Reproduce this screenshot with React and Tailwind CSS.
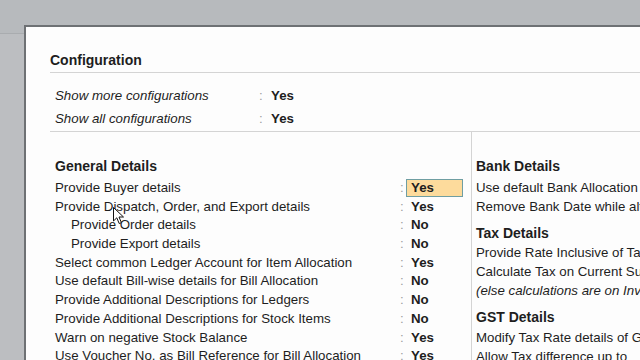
const configRows = [
  { label: "Show more configurations", value: "Yes" },
  { label: "Show all configurations", value: "Yes" },
];

const generalRows = [
  { label: "Provide Buyer details", value: "Yes", active: true },
  { label: "Provide Dispatch, Order, and Export details", value: "Yes" },
  { label: "Provide Order details", value: "No", sub: true },
  { label: "Provide Export details", value: "No", sub: true },
  { label: "Select common Ledger Account for Item Allocation", value: "Yes" },
  { label: "Use default Bill-wise details for Bill Allocation", value: "No" },
  { label: "Provide Additional Descriptions for Ledgers", value: "No" },
  { label: "Provide Additional Descriptions for Stock Items", value: "No" },
  { label: "Warn on negative Stock Balance", value: "Yes" },
  { label: "Use Voucher No. as Bill Reference for Bill Allocation", value: "Yes" },
];

const Row = ({ label, value, active, sub }) => (
  <div className="flex items-center h-[18.7px] leading-[18.7px] whitespace-nowrap">
    <div className={`w-[345px] ${sub ? "pl-[16px]" : ""}`}>{label}</div>
    <div className="w-[6px] text-[#a0a0a0]">:</div>
    {active ? (
      <div className="w-[57px] h-[18px] leading-[16px] pl-[4px] font-bold bg-[#fddb9c] border border-[#6f9ea2]">
        {value}
      </div>
    ) : (
      <div className="w-[57px] pl-[5px] font-bold">{value}</div>
    )}
  </div>
);

const Line = ({ children, italic }) => (
  <div className={`h-[18.7px] leading-[18.7px] whitespace-nowrap ${italic ? "italic" : ""}`}>
    {children}
  </div>
);

const Cursor = () => (
  <svg
    className="absolute left-[113px] top-[207px]"
    width="12"
    height="18"
    viewBox="0 0 12 18"
  >
    <path
      d="M0.5 0.5 L0.5 14 L3.8 10.8 L6.2 16.5 L8.4 15.6 L6 10 L10.5 10 Z"
      fill="#ffffff"
      stroke="#111111"
      strokeWidth="1"
      strokeLinejoin="round"
    />
  </svg>
);

export default function App() {
  return (
    <div className="relative w-[640px] h-[360px] overflow-hidden bg-[#b7babd] font-['Liberation_Sans',Arial,sans-serif] text-[13.3px] text-[#1e1e1e] flex flex-col">
      <div className="h-[25px] shrink-0" />
      <div className="flex flex-1 min-h-0">
        {/* left strip of the window behind */}
        <div className="w-[24px] shrink-0 flex flex-col">
          <div className="h-[8px]" />
          <div className="flex-1 bg-[#bcbec1] border-t border-[#a9acaf]" />
        </div>

        {/* Main panel */}
        <div className="flex-1 min-w-0 bg-[#fdfdfd] border-t-2 border-l-2 border-[#6e7174] pl-[24px] pt-[24px] overflow-hidden">
          <div className="text-[14px] leading-[18px] font-bold pb-[3px] border-b border-[#d4d4d4]">
            Configuration
          </div>

          <div className="pt-[11px] pb-[1px] border-b border-[#d4d4d4]">
            {configRows.map((r) => (
              <div key={r.label} className="flex h-[23px] leading-[23px] pl-[5px] italic whitespace-nowrap">
                <div className="w-[204px]">{r.label}</div>
                <div className="w-[12px] not-italic text-[#a0a0a0]">:</div>
                <div className="not-italic font-bold">{r.value}</div>
              </div>
            ))}
          </div>

          <div className="flex">
            {/* General details */}
            <div className="w-[422px] shrink-0 border-r border-[#d4d4d4] pl-[5px] pt-[23px]">
              <div className="h-[24px] leading-[22px] text-[14px] font-bold">General Details</div>
              {generalRows.map((r) => (
                <Row key={r.label} {...r} />
              ))}
            </div>

            {/* Right column */}
            <div className="flex-1 min-w-0 pl-[4px] pt-[23px]">
              <div className="h-[24px] leading-[22px] text-[14px] font-bold whitespace-nowrap">Bank Details</div>
              <Line>Use default Bank Allocation for Cheque Printing</Line>
              <Line>Remove Bank Date while altering Vouchers</Line>
              <div className="pt-[6px] h-[28px] leading-[22px] text-[14px] font-bold whitespace-nowrap">Tax Details</div>
              <Line>Provide Rate Inclusive of Tax for Stock Items</Line>
              <Line>Calculate Tax on Current Subtotal</Line>
              <Line italic>(else calculations are on Invoice Value)</Line>
              <div className="pt-[6px] h-[29px] leading-[22px] text-[14px] font-bold whitespace-nowrap">GST Details</div>
              <Line>Modify Tax Rate details of GST</Line>
              <Line>Allow Tax difference up to</Line>
            </div>
          </div>
        </div>
      </div>
      <Cursor />
    </div>
  );
}
